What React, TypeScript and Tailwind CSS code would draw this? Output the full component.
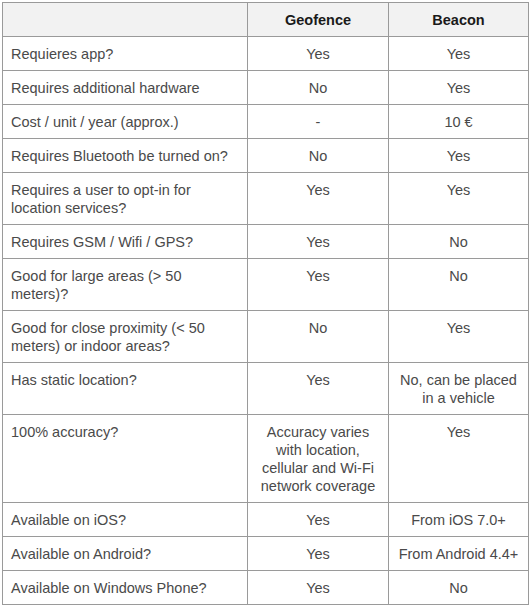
import React from 'react';

type Row = [string, string, string];

const rows: Row[] = [
  ['Requieres app?', 'Yes', 'Yes'],
  ['Requires additional hardware', 'No', 'Yes'],
  ['Cost / unit / year (approx.)', '-', '10 €'],
  ['Requires Bluetooth be turned on?', 'No', 'Yes'],
  ['Requires a user to opt-in for location services?', 'Yes', 'Yes'],
  ['Requires GSM / Wifi / GPS?', 'Yes', 'No'],
  ['Good for large areas (> 50 meters)?', 'Yes', 'No'],
  ['Good for close proximity (< 50 meters) or indoor areas?', 'No', 'Yes'],
  ['Has static location?', 'Yes', 'No, can be placed in a vehicle'],
  ['100% accuracy?', 'Accuracy varies with location, cellular and Wi-Fi network coverage', 'Yes'],
  ['Available on iOS?', 'Yes', 'From iOS 7.0+'],
  ['Available on Android?', 'Yes', 'From Android 4.4+'],
  ['Available on Windows Phone?', 'Yes', 'No'],
];

const cell = 'border border-[#9a9a9a] px-[8px] pt-[8px] pb-[7px] align-top leading-[18px]';

export default function App() {
  return (
    <div className="min-h-screen bg-white p-[2px] font-['Liberation_Sans',Arial,sans-serif] text-[14.5px] text-[#4a4a4a]">
      <table className="w-[526px] table-fixed border-collapse">
        <colgroup>
          <col className="w-[245px]" />
          <col className="w-[141px]" />
          <col className="w-[140px]" />
        </colgroup>
        <thead>
          <tr className="bg-[#f2f2f2] text-[#1a1a1a]">
            <th className={cell}></th>
            <th className={`${cell} text-center font-bold`}>Geofence</th>
            <th className={`${cell} text-center font-bold`}>Beacon</th>
          </tr>
        </thead>
        <tbody>
          {rows.map(([label, geo, beacon]) => (
            <tr key={label}>
              <td className={`${cell} text-left`}>{label}</td>
              <td className={`${cell} text-center`}>{geo}</td>
              <td className={`${cell} text-center`}>{beacon}</td>
            </tr>
          ))}
        </tbody>
      </table>
    </div>
  );
}
